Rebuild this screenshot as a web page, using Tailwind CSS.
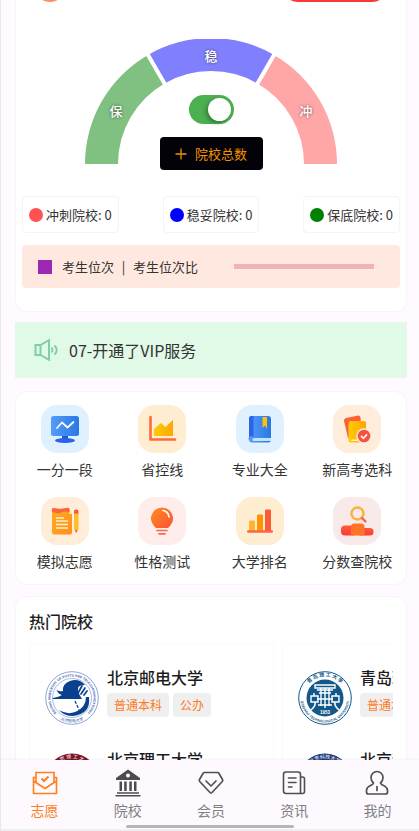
<!DOCTYPE html>
<html lang="zh-CN">
<head>
  <meta charset="UTF-8">
  <meta name="viewport" content="width=device-width, initial-scale=1.0">
  <title>志愿</title>
  <script src="https://cdn.jsdelivr.net/npm/@tailwindcss/browser@4"></script>
</head>
<body class="h-screen flex flex-col overflow-hidden border-l border-[#e9e7eb] bg-[#fefaff] font-['Noto_Sans_CJK_SC',sans-serif] text-[#333]">

  <main class="flex-1 min-h-0 overflow-hidden pl-3.5 pr-3">

    <!-- Gauge card -->
    <section class="rounded-b-xl border border-t-0 border-[#f8f3f8] bg-white px-1.5 pb-[23px]">
      <div class="flex h-[2px] items-end justify-between overflow-hidden pl-3 pr-3">
        <span class="size-8 shrink-0 rounded-full bg-[#ff8a65]"></span>
        <button type="button" aria-label="VIP" class="h-8 w-[106px] shrink-0 rounded-full bg-[#f93a2f]"></button>
      </div>

      <div class="mt-[37px] grid justify-items-center">
        <svg class="col-start-1 row-start-1 w-[252px] h-[125px]" viewBox="0 0 252 125">
          <path d="M0 125A126 126 0 0 1 63 15.9L79.5 44.5A93 93 0 0 0 33 125Z" fill="#80c080"/>
          <path d="M63 15.9A126 126 0 0 1 189 15.9L172.5 44.5A93 93 0 0 0 79.5 44.5Z" fill="#8080ff"/>
          <path d="M189 15.9A126 126 0 0 1 252 125H219A93 93 0 0 0 172.5 44.5Z" fill="#ffa6a6"/>
          <path d="M61 12.5L81.500 48M191 12.500L170.500 48" stroke="#fff" stroke-width="4"/>
          <g fill="#fff" font-size="13" font-weight="500" text-anchor="middle" class="[text-shadow:0_0_3px_rgba(0,0,0,0.6)]">
            <text x="31" y="77">保</text>
            <text x="126" y="22">稳</text>
            <text x="221" y="77">冲</text>
          </g>
        </svg>
        <div class="col-start-1 row-start-1 flex flex-col items-center pt-14">
          <label class="block h-[29px]">
            <input type="checkbox" checked aria-label="院校总数" class="block h-[29px] w-[45px] appearance-none rounded-full bg-[#9e9e9e] p-[3px] checked:bg-[#4caf50] before:block before:size-[23px] before:rounded-full before:bg-white before:shadow-[-2px_2px_4px_rgba(0,0,0,0.3)] checked:before:ml-4">
          </label>
          <button type="button" class="mt-[13px] flex h-[33px] w-[103px] items-center justify-center gap-2 rounded bg-[#020208] text-[13px] leading-5 text-[#f59300]">
            <svg class="size-3" viewBox="0 0 12 12"><path d="M6 0.500V11.500M0.500 6H11.500" stroke="#f59300" stroke-width="1.300"/></svg>
            院校总数
          </button>
        </div>
      </div>

      <ul class="mt-[26px] flex justify-between text-[13px] leading-5">
        <li class="flex h-[37px] items-center gap-[3px] rounded border border-[#f6f2f6] px-1.5"><span class="size-3.5 rounded-full bg-[#ff5252]"></span>冲刺院校: 0</li>
        <li class="flex h-[37px] items-center gap-[3px] rounded border border-[#f6f2f6] px-1.5"><span class="size-3.5 rounded-full bg-[#0000ff]"></span>稳妥院校: 0</li>
        <li class="flex h-[37px] items-center gap-[3px] rounded border border-[#f6f2f6] px-1.5"><span class="size-3.5 rounded-full bg-[#008000]"></span>保底院校: 0</li>
      </ul>

      <div class="mt-3 flex h-[43px] items-center rounded bg-[#ffe8e0] pl-4 pr-[26px] text-[13px] leading-5">
        <span class="mr-2.5 size-3.5 bg-[#9c27b0]"></span>
        <span>考生位次</span>
        <span class="w-[19px] text-center">|</span>
        <span>考生位次比</span>
        <span class="ml-auto h-[5px] w-[140px] bg-[#efb4b3]"></span>
      </div>
    </section>

    <!-- Notice -->
    <div class="mt-2.5 flex h-14 items-center gap-2.5 bg-[#e1f9e7] pl-[19px]">
      <svg class="h-6 w-[25px]" viewBox="0 0 25 24" fill="none" stroke="#7fcdaa" stroke-width="2">
        <path d="M1.500 7H6.500V17H1.500ZM6.500 7L15 2.200V21.800L6.500 17"/>
        <path d="M17.500 9.500Q19.500 12 17.500 14.500M20.500 7.500Q25 12 20.500 16.500" stroke-width="1.900"/>
      </svg>
      <p class="text-base leading-6">07-开通了VIP服务</p>
    </div>

    <!-- Shortcuts -->
    <nav class="mt-[13px] grid grid-cols-4 gap-y-[17px] rounded-xl border border-[#f8f3f8] bg-white pt-[13px] pb-3 text-sm leading-[21px] whitespace-nowrap">
      <a href="#" class="flex flex-col items-center gap-1.5">
        <svg class="size-12" viewBox="0 0 48 48">
          <defs><linearGradient id="blue"><stop stop-color="#569bfb"/><stop offset="1" stop-color="#2878e2"/></linearGradient></defs>
          <rect width="48" height="48" rx="16" fill="#dff1ff"/>
          <path d="M21 30H27V34H21Z" fill="#2458d8"/>
          <ellipse cx="24" cy="35.500" rx="10" ry="2.500" fill="#2864e6"/>
          <rect x="10" y="11" width="28" height="20" rx="2.500" fill="url(#blue)"/>
          <path d="M16 23L21 17.500L26.500 22.500L32.500 17" fill="none" stroke="#fff" stroke-width="1.700" stroke-linecap="round" stroke-linejoin="round"/>
        </svg>
        一分一段
      </a>
      <a href="#" class="flex flex-col items-center gap-1.5">
        <svg class="size-12" viewBox="0 0 48 48">
          <defs><linearGradient id="gold"><stop stop-color="#ffcb05"/><stop offset="1" stop-color="#ffa600"/></linearGradient></defs>
          <rect width="48" height="48" rx="16" fill="#ffedd2"/>
          <path d="M16 31V24L23 18L27.500 22L35 15V31Z" fill="url(#gold)"/>
          <path d="M12.500 12V34.500H37" fill="none" stroke="#ff6a35" stroke-width="2.600" stroke-linecap="round" stroke-linejoin="round"/>
        </svg>
        省控线
      </a>
      <a href="#" class="flex flex-col items-center gap-1.5">
        <svg class="size-12" viewBox="0 0 48 48">
          <rect width="48" height="48" rx="16" fill="#dff1ff"/>
          <rect x="13" y="11" width="22" height="26.500" rx="3" fill="url(#blue)"/>
          <path d="M16 11H15.500A2.500 2.500 0 0 0 13 13.500V35A2.500 2.500 0 0 1 17.500 32.500V11Z" fill="#2d62e9"/>
          <path d="M18 33H35V36H18A1.500 1.500 0 0 1 18 33Z" fill="#c5e2ff"/>
          <path d="M26.500 12H31V23.500L28.750 20.500L26.500 23Z" fill="#ffc107"/>
        </svg>
        专业大全
      </a>
      <a href="#" class="flex flex-col items-center gap-1.5">
        <svg class="size-12" viewBox="0 0 48 48">
          <rect width="48" height="48" rx="16" fill="#ffeddc"/>
          <path d="M13 13L25.500 10.500Q27 10.500 27.500 12.500L29 30L15 33L11 16Q10.800 13.700 13 13Z" fill="#fc6139"/>
          <path d="M17.500 16H31Q33 16 33 18V34Q33 37.500 30 37.500H18Q15.500 37.500 15.500 35V18Q15.500 16 17.500 16Z" fill="url(#gold)"/>
          <path d="M18.500 34.500H27V36H18.500Z" fill="#fff1bd"/>
          <circle cx="31" cy="31" r="7.800" fill="#ffeddc"/>
          <circle cx="31" cy="31" r="6.300" fill="#fb503b"/>
          <path d="M28 31L30.500 33.300L34 29.300" fill="none" stroke="#fff" stroke-width="1.700"/>
        </svg>
        新高考选科
      </a>
      <a href="#" class="flex flex-col items-center gap-1.5">
        <svg class="size-12" viewBox="0 0 48 48">
          <defs><linearGradient id="amber" x2="1" y2="1"><stop stop-color="#ffae22"/><stop offset="1" stop-color="#ff8d1c"/></linearGradient></defs>
          <rect width="48" height="48" rx="16" fill="#ffedd9"/>
          <path d="M11 12H28.500V17H31V35.500Q31 37.500 29 37.500H13Q11 37.500 11 35.500Z" fill="url(#amber)"/>
          <path d="M11 12Q11 10.500 13 11Q19 12.500 25 11Q28.500 10 28.500 12V15Q23 14 20 15.500T11 15Z" fill="#fd643a"/>
          <path d="M15 21H23M15 24H27M15 27.500H27M15 31H27" stroke="#fff1c9" stroke-width="1.300"/>
          <path d="M33 16H37.500V32L35.250 36L33 32Z" fill="#ffbd29"/>
          <path d="M33 13.500Q35.250 11.500 37.500 13.500V16.500H33Z" fill="#f8573a"/>
          <path d="M34 33H36.500L35.250 36Z" fill="#f8573a"/>
        </svg>
        模拟志愿
      </a>
      <a href="#" class="flex flex-col items-center gap-1.5">
        <svg class="size-12" viewBox="0 0 48 48">
          <defs><linearGradient id="bulb" x2="1" y2="1"><stop stop-color="#ff8e24"/><stop offset="1" stop-color="#fb5132"/></linearGradient></defs>
          <rect width="48" height="48" rx="16" fill="#ffedec"/>
          <path d="M24 10.500A11 11 0 0 1 32 29L30 31H18L16 29A11 11 0 0 1 24 10.500Z" fill="url(#bulb)"/>
          <path d="M25 13.500Q30.500 14.500 31 20" fill="none" stroke="#fff" stroke-width="1.700" stroke-linecap="round"/>
          <path d="M19 33.500H29M21 36.800H27" stroke="#fb6747" stroke-width="1.700" stroke-linecap="round"/>
        </svg>
        性格测试
      </a>
      <a href="#" class="flex flex-col items-center gap-1.5">
        <svg class="size-12" viewBox="0 0 48 48">
          <rect width="48" height="48" rx="16" fill="#ffedd2"/>
          <rect x="13" y="23.500" width="6" height="11" rx="1" fill="#ffb42b"/>
          <rect x="21" y="17.500" width="6" height="17" rx="1" fill="#ff9300"/>
          <rect x="29" y="12.500" width="6" height="22" rx="1" fill="#fd5b38"/>
          <rect x="11" y="33.300" width="26" height="2.500" rx="1.250" fill="#fb6541"/>
        </svg>
        大学排名
      </a>
      <a href="#" class="flex flex-col items-center gap-1.5">
        <svg class="size-12" viewBox="0 0 48 48">
          <defs><linearGradient id="red" x2="0" y2="1"><stop stop-color="#ff5a35"/><stop offset="1" stop-color="#fb3a3a"/></linearGradient></defs>
          <rect width="48" height="48" rx="16" fill="#f9eaea"/>
          <rect x="8" y="28.500" width="16" height="10" rx="4" fill="url(#red)"/>
          <rect x="24" y="31" width="16.500" height="7.500" rx="3.500" fill="url(#red)"/>
          <path d="M18 38.500V30Q18 26.500 21 26.500H28Q31.500 26.500 31.500 30V38.500Z" fill="#ff7424"/>
          <circle cx="24.500" cy="16.500" r="6" fill="none" stroke="#f9b03d" stroke-width="2.400"/>
          <path d="M29 21L32.500 24.500" stroke="#f4623c" stroke-width="2.400" stroke-linecap="round"/>
        </svg>
        分数查院校
      </a>
    </nav>

    <!-- Popular schools -->
    <section class="mt-[11px] rounded-xl border border-[#f8f3f8] bg-white px-[13px] pt-3">
      <h2 class="text-base leading-6 font-medium text-[#1c1c1e]">热门院校</h2>
      <div class="mt-2.5 flex gap-2 overflow-hidden">
        <ul class="flex w-[245px] shrink-0 flex-col gap-[19px] rounded border border-[#fbf9fb] pt-[22px] pl-[15px]">
          <li class="flex items-center gap-2">
            <svg class="size-[54px] shrink-0" viewBox="0 0 54 54">
              <defs>
                <path id="ring" d="M14.700 44.600A21.500 21.500 0 1 1 39.300 44.600"/>
                <path id="ringTop" d="M5.500 27A21.500 21.500 0 0 1 48.500 27"/>
                <path id="ringBottom" d="M2.500 27A24.500 24.500 0 0 0 51.500 27"/>
              </defs>
              <circle cx="27" cy="27" r="26.300" fill="#fff" stroke="#6f8fcb" stroke-width="0.800"/>
              <circle cx="27" cy="27" r="19.500" fill="none" stroke="#6f8fcb" stroke-width="0.600"/>
              <text font-family="Liberation Sans" font-size="3.300" font-weight="700" fill="#345ead" text-anchor="middle"><textPath href="#ring" startOffset="50%">BEIJING UNIVERSITY OF POSTS AND TELECOMMUNICATIONS</textPath></text>
              <text font-size="4" fill="#345ead" text-anchor="middle"><textPath href="#ringBottom" startOffset="50%">北京邮电大学</textPath></text>
              <path d="M8 27Q14 26 17 24Q13 23 11.500 19Q15 21 18 20Q17 13 25 10Q34 7 40 14Q32 14 33 19Q34 24 37 28H8Z" fill="#0a418f"/>
              <path d="M44 26Q46 43 28 45Q19 45 14 39Q22 44 30 41Q41 37 41 26Z" fill="#0a418f"/>
              <path d="M33 22L37 15M36 23L40 17M39 24L42 20" stroke="#0a418f" stroke-width="1.700" stroke-linecap="round"/>
              <path d="M30 30L35 41" stroke="#0a418f" stroke-width="1.300" stroke-dasharray="3 1.500"/>
            </svg>
            <div class="pb-3">
              <h3 class="text-base leading-[22px] font-medium text-[#1c1c1e]">北京邮电大学</h3>
              <p class="mt-[5px] flex gap-1 text-xs leading-6 text-[#ff7a1f]"><span class="rounded bg-[#efefef] px-[7px]">普通本科</span><span class="rounded bg-[#efefef] px-[7px]">公办</span></p>
            </div>
          </li>
          <li class="flex items-center gap-2">
            <svg class="size-[54px] shrink-0" viewBox="0 0 54 54">
              <circle cx="27" cy="27" r="26.500" fill="#7c1428"/>
              <text font-size="5" fill="#fff" text-anchor="middle"><textPath href="#ringTop" startOffset="50%">北 京 理 工 大 学</textPath></text>
              <circle cx="27" cy="27" r="18" fill="#fff"/>
            </svg>
            <div class="pb-3">
              <h3 class="text-base leading-[22px] font-medium text-[#1c1c1e]">北京理工大学</h3>
              <p class="mt-[5px] flex gap-1 text-xs leading-6 text-[#ff7a1f]"><span class="rounded bg-[#efefef] px-[7px]">普通本科</span><span class="rounded bg-[#efefef] px-[7px]">公办</span></p>
            </div>
          </li>
        </ul>
        <ul class="flex w-[245px] shrink-0 flex-col gap-[19px] rounded border border-[#fbf9fb] pt-[22px] pl-[15px]">
          <li class="flex items-center gap-2">
            <svg class="size-[54px] shrink-0" viewBox="0 0 54 54">
              <circle cx="27" cy="27" r="26.300" fill="#fff" stroke="#12588a" stroke-width="1"/>
              <circle cx="27" cy="27" r="18.500" fill="#12588a"/>
              <text font-size="5" font-weight="700" fill="#12588a" text-anchor="middle"><textPath href="#ringTop" startOffset="50%">青 岛 理 工 大 学</textPath></text>
              <text font-family="Liberation Sans" font-size="3.500" font-weight="700" fill="#12588a" text-anchor="middle"><textPath href="#ringBottom" startOffset="50%">QINGDAO TECHNOLOGICAL UNIVERSITY</textPath></text>
              <path d="M17 14H37V17H17ZM19 19H35M21 22H33M23 17V35M27 17V37M31 17V35M13 25H20V31H13ZM34 25H41V31H34ZM19 28H35M20 34H34M16 25V22M38 25V22" fill="none" stroke="#fff" stroke-width="1.400"/>
              <path d="M13 39Q18 35 17 31M41 39Q36 35 37 31" fill="none" stroke="#fff" stroke-width="1.600"/>
              <text x="27" y="42.500" font-family="Liberation Sans" font-size="4.500" font-weight="700" fill="#fff" text-anchor="middle">1953</text>
            </svg>
            <div class="pb-3 whitespace-nowrap">
              <h3 class="text-base leading-[22px] font-medium text-[#1c1c1e]">青岛理工大学</h3>
              <p class="mt-[5px] flex gap-1 text-xs leading-6 text-[#ff7a1f]"><span class="rounded bg-[#efefef] px-[7px]">普通本科</span><span class="rounded bg-[#efefef] px-[7px]">公办</span></p>
            </div>
          </li>
          <li class="flex items-center gap-2">
            <svg class="size-[54px] shrink-0" viewBox="0 0 54 54">
              <circle cx="27" cy="27" r="26.500" fill="#1c3c7c"/>
              <text font-size="5" fill="#fff" text-anchor="middle"><textPath href="#ringTop" startOffset="50%">北京科技大学</textPath></text>
              <circle cx="27" cy="27" r="18" fill="#fff"/>
            </svg>
            <div class="pb-3 whitespace-nowrap">
              <h3 class="text-base leading-[22px] font-medium text-[#1c1c1e]">北京科技大学</h3>
              <p class="mt-[5px] flex gap-1 text-xs leading-6 text-[#ff7a1f]"><span class="rounded bg-[#efefef] px-[7px]">普通本科</span><span class="rounded bg-[#efefef] px-[7px]">公办</span></p>
            </div>
          </li>
        </ul>
      </div>
    </section>
  </main>

  <!-- Tab bar -->
  <footer class="z-10 shrink-0 border-b-2 border-[#efefef] bg-[#fdf9ff] pt-[9px] pb-px shadow-[0_-1px_2px_rgba(0,0,0,0.05)]">
    <nav class="grid grid-cols-5 pl-0.5 text-sm leading-5 text-[#808080]">
      <a href="#" class="flex flex-col items-center gap-[3px] text-[#ff7f1a]">
        <svg class="size-7" viewBox="0 0 28 28" fill="none" stroke="#ff7f1a" stroke-width="1.600">
          <path d="M5 8.500H2.500V24.500H25.500V8.500H23M5 14.500V3.500H23V14.500M2.500 12L14 19.500L25.500 12"/>
          <path d="M10.500 9.500L13 12L17.500 7.500" stroke-width="2"/>
        </svg>
        志愿
      </a>
      <a href="#" class="flex flex-col items-center gap-[3px]">
        <svg class="size-7" viewBox="0 0 28 28" fill="#4c4c4c">
          <path fill-rule="evenodd" d="M14 0.500L26 9V11H2V9ZM14 4.500A2 2 0 1 0 14 8.500A2 2 0 1 0 14 4.500Z"/>
          <path d="M5.500 12.500H8V22H5.500ZM10.200 12.500H12.700V22H10.200ZM15.300 12.500H17.800V22H15.300ZM20 12.500H22.500V22H20ZM3 23.300H25V24.700H3ZM1.500 26H26.500V27.500H1.500Z"/>
        </svg>
        院校
      </a>
      <a href="#" class="flex flex-col items-center gap-[3px]">
        <svg class="size-7" viewBox="0 0 28 28" fill="none" stroke="#505050" stroke-width="1.700" stroke-linejoin="round" stroke-linecap="round">
          <path d="M7.500 3.500H20.500Q21.500 3.500 22 4.500L25.500 10.500Q26 11.500 25.300 12.500L15 23.500Q14 24.500 13 23.500L2.700 12.500Q2 11.500 2.500 10.500L6 4.500Q6.500 3.500 7.500 3.500Z"/>
          <path d="M9 12L14 17L19 12"/>
        </svg>
        会员
      </a>
      <a href="#" class="flex flex-col items-center gap-[3px]">
        <svg class="size-7" viewBox="0 0 28 28" fill="none" stroke="#505050" stroke-width="1.600" stroke-linejoin="round" stroke-linecap="round">
          <path d="M20.500 24.500H6Q3.500 24.500 3.500 22V5.500Q3.500 3 6 3H18Q20.500 3 20.500 5.500V24.500ZM20.500 8H22.500Q24.500 8 24.500 10V22.500Q24.500 24.500 22.500 24.500H20.500"/>
          <path d="M8.500 9H16M8.500 13.500H16M8.500 18H12"/>
        </svg>
        资讯
      </a>
      <a href="#" class="flex flex-col items-center gap-[3px]">
        <svg class="size-7" viewBox="0 0 28 28" fill="none" stroke="#505050" stroke-width="1.700" stroke-linejoin="round" stroke-linecap="round">
          <path d="M10.500 14Q8 12 8 8.500A6 6 0 0 1 20 8.500Q20 12 17.500 14Q18 15.500 20.500 16.500Q24 18 24.500 21V23Q24.500 25 22.500 25H5.500Q3.500 25 3.500 23V21Q4 18 7.500 16.500Q10 15.500 10.500 14Z"/>
          <path d="M14 17.500V21.500"/>
        </svg>
        我的
      </a>
    </nav>
    <div class="mx-auto mt-[5px] h-[3px] w-2/5 rounded-full bg-[#b9b6ba]"></div>
  </footer>

</body>
</html>
